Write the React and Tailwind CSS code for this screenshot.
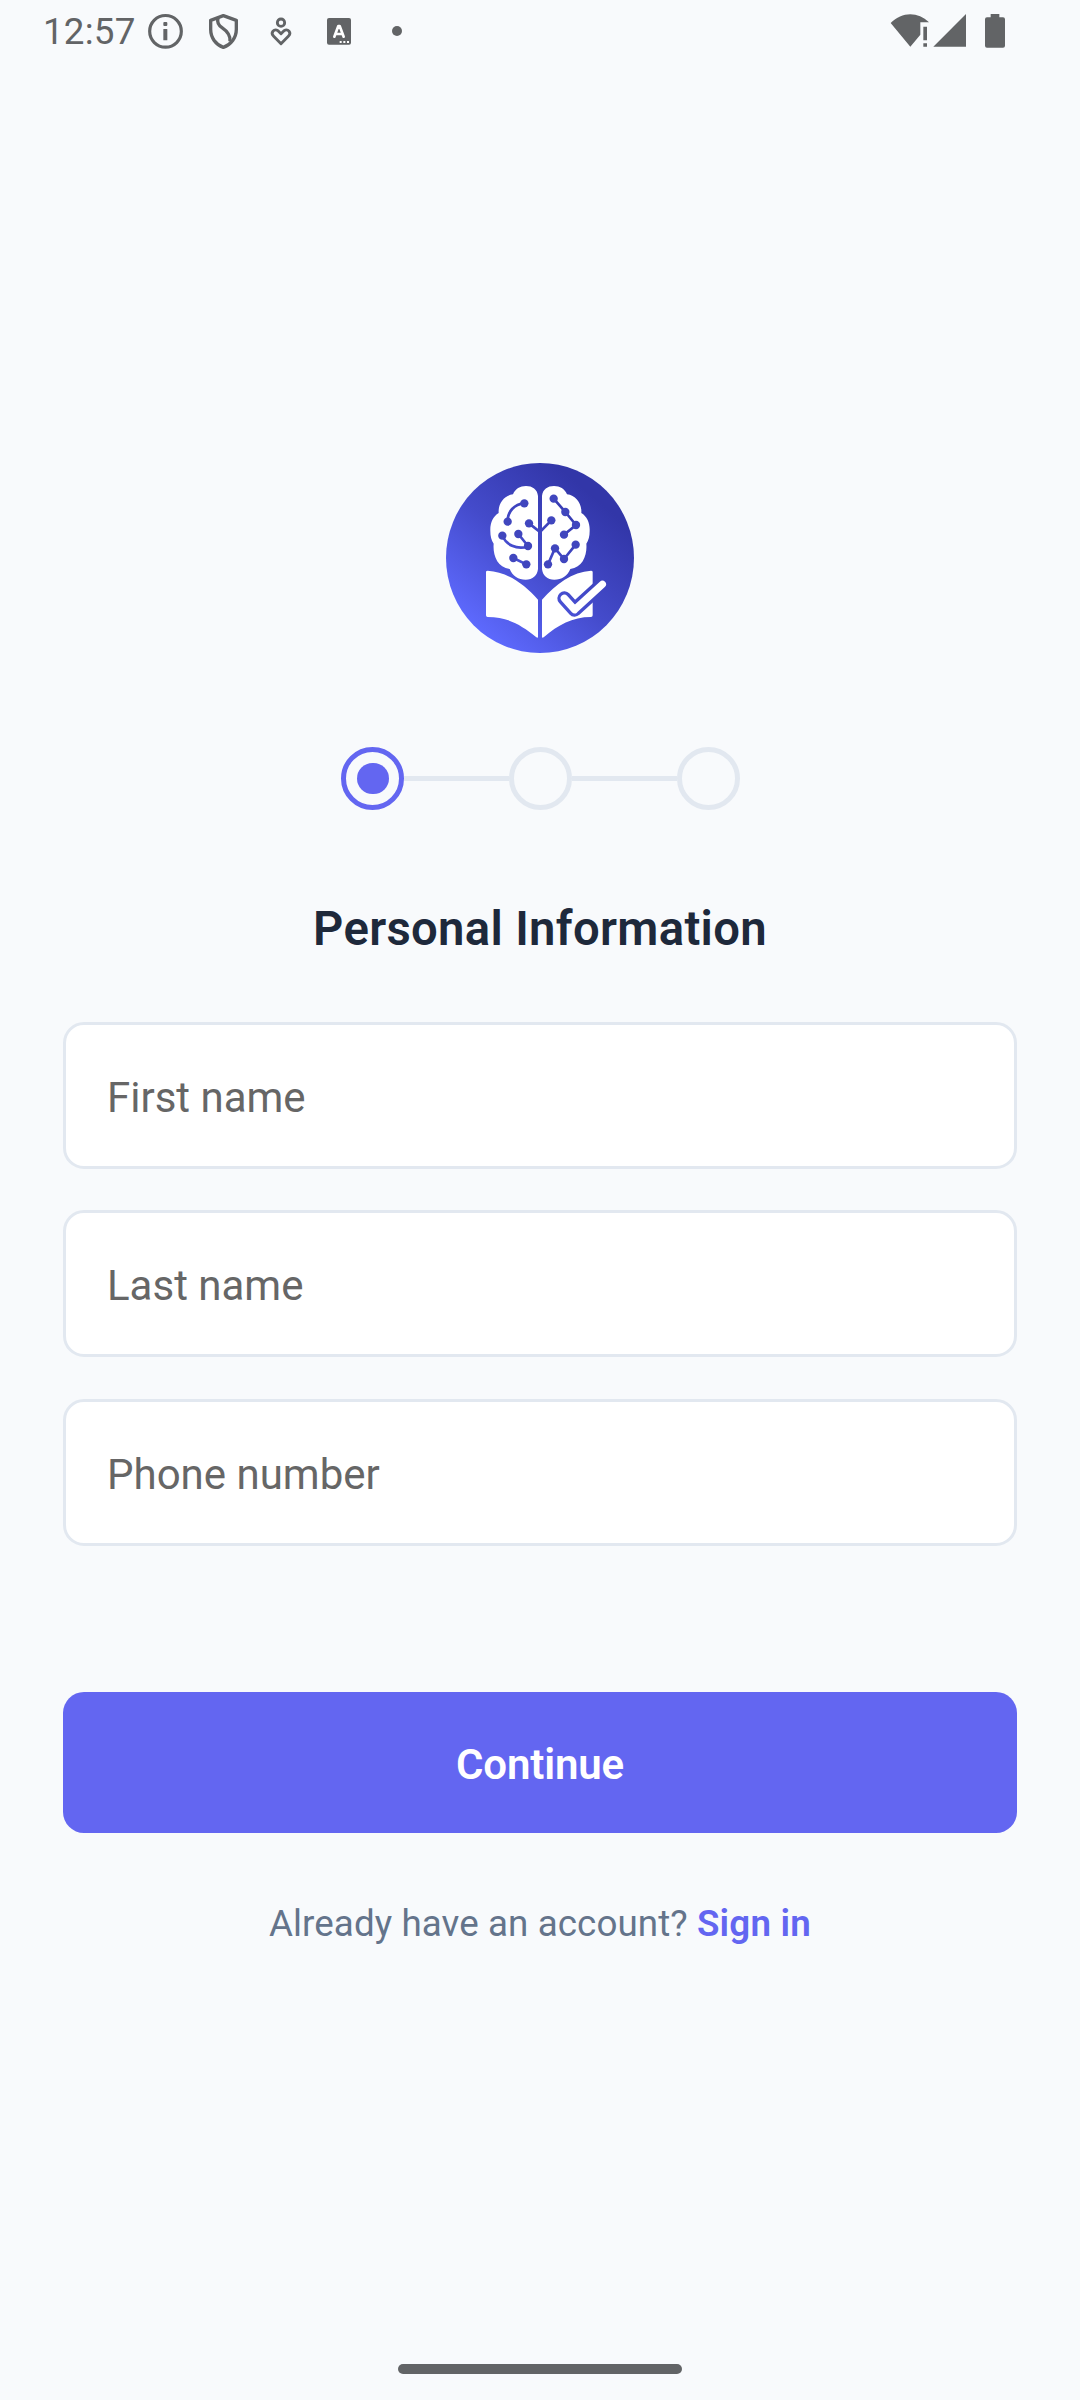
const INK = "#626466";

function StatusBar() {
  return (
    <header className="flex h-16 items-start pl-[42px]">
      <span className="mt-[10px] w-[100px] pl-px text-[36.75px] leading-[43px] tracking-[0.2px] text-[#626466]">12:57</span>
      <svg className="mt-[13px] ml-[5px] size-9" viewBox="351 39 108 108" fill={INK}>
        <circle cx="406.500" cy="94" r="47.500" fill="none" stroke={INK} strokeWidth="9.500" />
        <rect x="400" y="66" width="12" height="12" rx="3" />
        <rect x="400" y="87" width="12" height="34" rx="1" />
      </svg>
      <svg className="mt-[13px] ml-6 h-9 w-[32px]" viewBox="21 39 96 108" fill="none" stroke={INK} strokeWidth="10" strokeLinejoin="round">
        <path d="M70 47 L109 61 V88 C109 113 93 134 70 142 C47 134 32 113 32 88 V61 Z" />
        <path d="M54 54 C51 66 54 75 66 83 C82 94 92 105 90 124" />
      </svg>
      <svg className="mt-4 ml-[30px] h-8 w-6" viewBox="207 48 72 96" fill="none" stroke={INK} strokeWidth="8.500" strokeLinejoin="round">
        <circle cx="243" cy="68" r="11" />
        <path d="M243 131 L221 109 C210 98 222 85 234 92 L243 101 L252 92 C264 85 276 98 265 109 Z" />
      </svg>
      <svg className="mt-[17px] ml-[33px] h-[30px] w-[28px]" viewBox="378 51 84 90">
        <rect x="381" y="54" width="72" height="80" rx="6" fill={INK} />
        <path d="M403 110 L415 78 H419 L431 110 M407 102 H427" fill="none" stroke="#fff" strokeWidth="8" strokeLinecap="round" strokeLinejoin="round" />
        <path d="M419 123h6v6h-6z M430 123h6v6h-6z M441 123h6v6h-6z" fill="#fff" />
      </svg>
      <span className="mt-[26px] ml-[38px] size-[10px] rounded-full bg-[#626466]" />
      <svg className="mt-[13px] mr-[2px] ml-auto h-9 w-10" viewBox="60 39 120 108" fill={INK}>
        <path d="M62 69 C96 34 144 34 177 67 H151 V104 L121 140 Z" />
        <path d="M160 80h11v41h-11z M160 130h11v10h-11z" />
      </svg>
      <svg className="mt-[13px] h-9 w-9" viewBox="186 39 108 108" fill={INK}>
        <path d="M288 42 V140 H190 Z" />
      </svg>
      <svg className="mt-[13px] mr-[72px] ml-4 h-9 w-6" viewBox="342 39 72 108" fill={INK}>
        <path d="M362 42 H388 V52 H399 Q405 52 405 58 V137 Q405 143 399 143 H351 Q345 143 345 137 V58 Q345 52 351 52 H362 Z" />
      </svg>
    </header>
  );
}

const NODES = [
  [265, 148], [215, 203], [279, 208], [199, 245], [247, 240], [276, 276], [232, 312], [271, 331],
  [353, 134], [388, 174], [420, 213], [384, 242], [346, 199], [419, 272], [357, 283], [384, 315], [336, 331],
];

function Logo() {
  return (
    <svg className="size-52" viewBox="0 0 624 624">
      <defs>
        <linearGradient id="disc" gradientUnits="userSpaceOnUse" x1="170" y1="560" x2="510" y2="160">
          <stop offset="0" stopColor="#5d69fd" />
          <stop offset="0.5" stopColor="#444bcb" />
          <stop offset="1" stopColor="#3236a8" />
        </linearGradient>
      </defs>
      <ellipse cx="312" cy="312" rx="282" ry="285" fill="url(#disc)" />
      <g fill="#fff">
        <path d="M306 126 C304 106 289 96 270 96 C252 96 238 104 231 121 C204 124 186 149 188 177 C171 187 162 207 163 231 C163 247 166 259 173 269 C170 302 183 340 221 345 C230 367 247 377 269 377 C290 377 304 365 306 345 Z" />
        <path d="M318 126 C320 106 335 96 354 96 C372 96 386 104 393 121 C420 124 438 149 436 177 C453 187 462 207 461 231 C461 247 458 259 451 269 C454 302 441 340 403 345 C394 367 377 377 355 377 C334 377 320 365 318 345 Z" />
        <path d="M150 354 Q150 350 155 350 C213 353 265 390 306 437 V548 Q306 554 300 549 C256 513 216 489 155 489 Q150 489 150 484 Z" />
        <path d="M470 354 Q470 350 465 350 C409 353 360 390 318 437 V548 Q318 554 324 549 C366 513 409 489 465 489 Q470 489 470 484 Z" />
      </g>
      <g fill="none" stroke="url(#disc)" strokeWidth="8">
        <path d="M265 148 C235 150 214 173 215 203 M279 208 L312 234 L346 199 M199 245 C211 272 240 288 276 278 M247 240 L276 276 M232 312 L271 331" />
        <path d="M353 134 L388 174 L420 213 L384 242 M336 331 L357 283 L384 315 L419 272" />
      </g>
      <g fill="#4046be">
        {NODES.map(([x, y]) => (
          <circle key={`${x}-${y}`} cx={x} cy={y} r="12.500" />
        ))}
      </g>
      <g fill="none" strokeLinecap="round" strokeLinejoin="round">
        <path d="M385 433 L416 467 L499 391" stroke="url(#disc)" strokeWidth="42" />
        <path d="M385 433 L416 467 L499 391" stroke="#fff" strokeWidth="22" />
      </g>
    </svg>
  );
}

function Stepper() {
  return (
    <div className="flex items-center">
      <div className="flex size-[63px] items-center justify-center rounded-full border-5 border-[#6366f1]">
        <div className="h-[31px] w-8 rounded-full bg-[#6366f1]" />
      </div>
      <div className="h-[5px] w-[105px] bg-[#e2e8f0]" />
      <div className="size-[63px] rounded-full border-5 border-[#e2e8f0]" />
      <div className="h-[5px] w-[105px] bg-[#e2e8f0]" />
      <div className="size-[63px] rounded-full border-5 border-[#e2e8f0]" />
    </div>
  );
}

export default function App() {
  return (
    <div className="flex h-[2400px] w-[1080px] flex-col bg-[#f8fafc] font-[Roboto,sans-serif]">
      <StatusBar />
      <main className="flex flex-1 flex-col items-center px-[63px] pt-[390px]">
        <Logo />
        <div className="mt-[85px] pl-px">
          <Stepper />
        </div>
        <h1 className="mt-[91px] text-[47.25px] leading-[56px] font-[570] tracking-[0.32px] text-[#1e293b]">Personal Information</h1>
        <div className="mt-[65px] flex w-full flex-col gap-[41.300px]">
          {["First name", "Last name", "Phone number"].map((name) => (
            <input
              key={name}
              placeholder={name}
              className="h-[147px] w-full rounded-[21px] border-3 border-[#e2e8f0] bg-white pt-1 pl-[41px] text-[42px] outline-none placeholder:text-[#666666]"
            />
          ))}
        </div>
        <button className="mt-[146.400px] h-[141px] w-full rounded-[21px] bg-[#6366f1] pt-1 text-[42px] font-[580] tracking-[-0.15px] text-white">Continue</button>
        <p className="mt-[69px] text-[36.75px] leading-[43px] tracking-[0.09px] text-[#64748b]">
          Already have an account? <span className="font-[580] tracking-[0.2px] text-[#6366f1]">Sign in</span>
        </p>
      </main>
      <footer className="flex justify-center pb-[26px]">
        <div className="h-[10px] w-[284px] rounded-full bg-[#626466]" />
      </footer>
    </div>
  );
}
